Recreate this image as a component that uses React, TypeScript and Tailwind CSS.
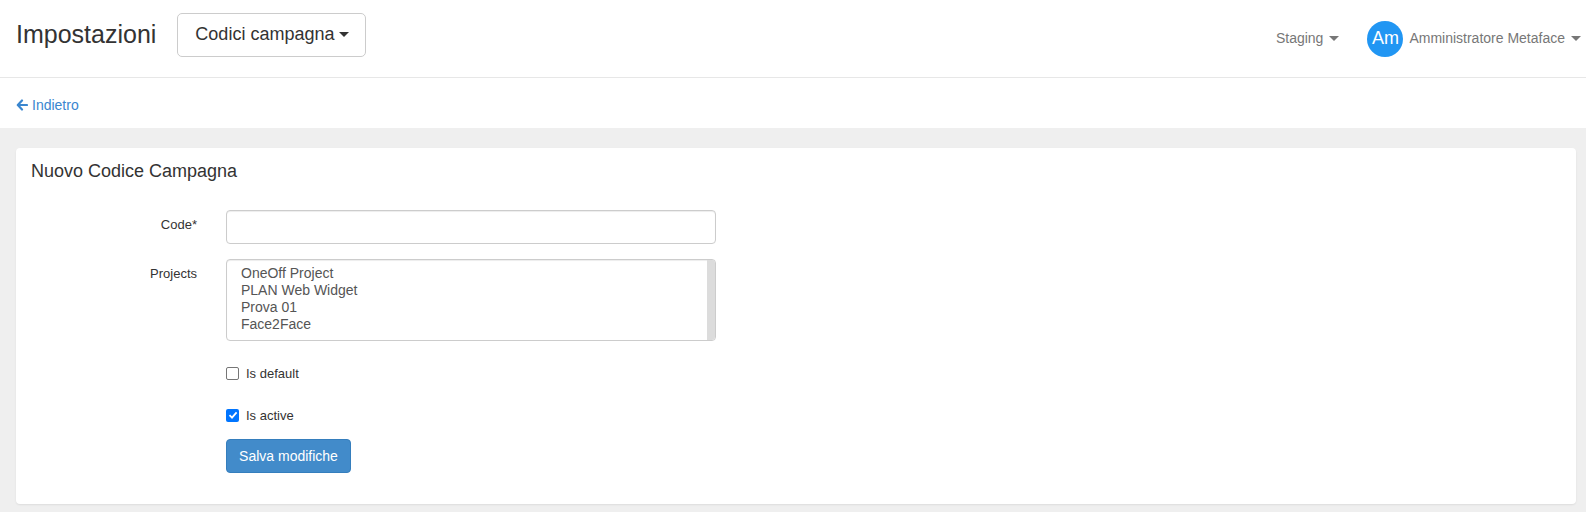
import React from "react"

function Caret({ className = "" }: { className?: string }) {
  return (
    <span
      className={
        "inline-block w-0 h-0 border-t-[5px] border-x-[5px] border-x-transparent align-middle " +
        className
      }
    />
  )
}

export default function App() {
  const projects = ["OneOff Project", "PLAN Web Widget", "Prova 01", "Face2Face"]

  return (
    <div className="w-[1586px] h-[512px] bg-[#efefef] text-[#333] font-['Liberation_Sans',Arial,sans-serif] overflow-hidden">
      {/* top bar */}
      <header className="h-[78px] bg-white border-b border-[#e7e7e7] flex items-center pl-4 pr-[5px]">
        <h1 className="text-[25px] leading-none text-[#333] mt-[-8px]">Impostazioni</h1>
        <button className="ml-[21px] mt-[-8px] h-[44px] w-[189px] border border-[#ccc] rounded-[5px] bg-white flex items-center pl-[17px] text-[18px] text-[#333]">
          Codici campagna
          <Caret className="ml-[5px] border-t-[#333]" />
        </button>
        <div className="flex-1" />
        <div className="flex items-center text-[14px] text-[#777]">
          <span>Staging</span>
          <Caret className="ml-[6px] border-t-[#777] border-t-[4px] border-x-[4px]" />
        </div>
        <div className="flex items-center ml-[28px]">
          <div className="w-[36px] h-[36px] rounded-full bg-[#2196f3] text-white text-[18px] flex items-center justify-center">
            Am
          </div>
          <span className="ml-[6px] text-[14px] text-[#777]">Amministratore Metaface</span>
          <Caret className="ml-[6px] border-t-[#777] border-t-[4px] border-x-[4px]" />
        </div>
      </header>

      {/* back bar */}
      <div className="h-[50px] bg-white flex items-center pl-4">
        <a className="flex items-center text-[14px] text-[#3a86cf] mt-[4px]" href="#">
          <svg width="12" height="12" viewBox="0 0 12 12" className="mr-[4px]">
            <path d="M6 1.5 L1.8 6 L6 10.5 M2 6 H11" fill="none" stroke="#3a86cf" strokeWidth="2.2" strokeLinecap="round" strokeLinejoin="round" />
          </svg>
          Indietro
        </a>
      </div>

      {/* content */}
      <div className="pt-5 pl-4 pr-[10px]">
        <div className="bg-white rounded-[4px] shadow-[0_1px_2px_rgba(0,0,0,0.08)] h-[356px] px-[15px] pt-[13px]">
          <h2 className="text-[18px] leading-[20px] text-[#333]">Nuovo Codice Campagna</h2>

          <div className="mt-[29px] flex flex-col text-[13px]">
            <div className="flex items-start">
              <label className="w-[166px] text-right pt-[5px]">Code*</label>
              <input className="ml-[29px] w-[490px] h-[34px] border border-[#ccc] rounded-[4px] shadow-[inset_0_1px_1px_rgba(0,0,0,0.075)]" />
            </div>

            <div className="flex items-start mt-[15px]">
              <label className="w-[166px] text-right pt-[5px]">Projects</label>
              <div className="ml-[29px] w-[490px] h-[82px] border border-[#ccc] rounded-[4px] flex overflow-hidden shadow-[inset_0_1px_1px_rgba(0,0,0,0.075)]">
                <div className="flex-1 pl-[14px] pt-[5px] text-[14px] leading-[17px] text-[#555]">
                  {projects.map((p) => (
                    <div key={p}>{p}</div>
                  ))}
                </div>
                <div className="w-[8px] bg-[#dcdcdc]" />
              </div>
            </div>

            <div className="flex items-center ml-[195px] mt-[23px]">
              <span className="w-[13px] h-[13px] border border-[#767676] rounded-[2px] bg-white" />
              <span className="ml-[7px]">Is default</span>
            </div>

            <div className="flex items-center ml-[195px] mt-[22px]">
              <span className="w-[13px] h-[13px] rounded-[2px] bg-[#0075ff] flex items-center justify-center">
                <svg width="10" height="10" viewBox="0 0 10 10">
                  <path d="M1.5 5.2 L4 7.6 L8.6 2.4" fill="none" stroke="white" strokeWidth="1.8" />
                </svg>
              </span>
              <span className="ml-[7px]">Is active</span>
            </div>

            <div className="ml-[195px] mt-[14px]">
              <button className="w-[125px] h-[34px] bg-[#428bca] border border-[#357ebd] rounded-[4px] text-white text-[14px]">
                Salva modifiche
              </button>
            </div>
          </div>
        </div>
      </div>
    </div>
  )
}
